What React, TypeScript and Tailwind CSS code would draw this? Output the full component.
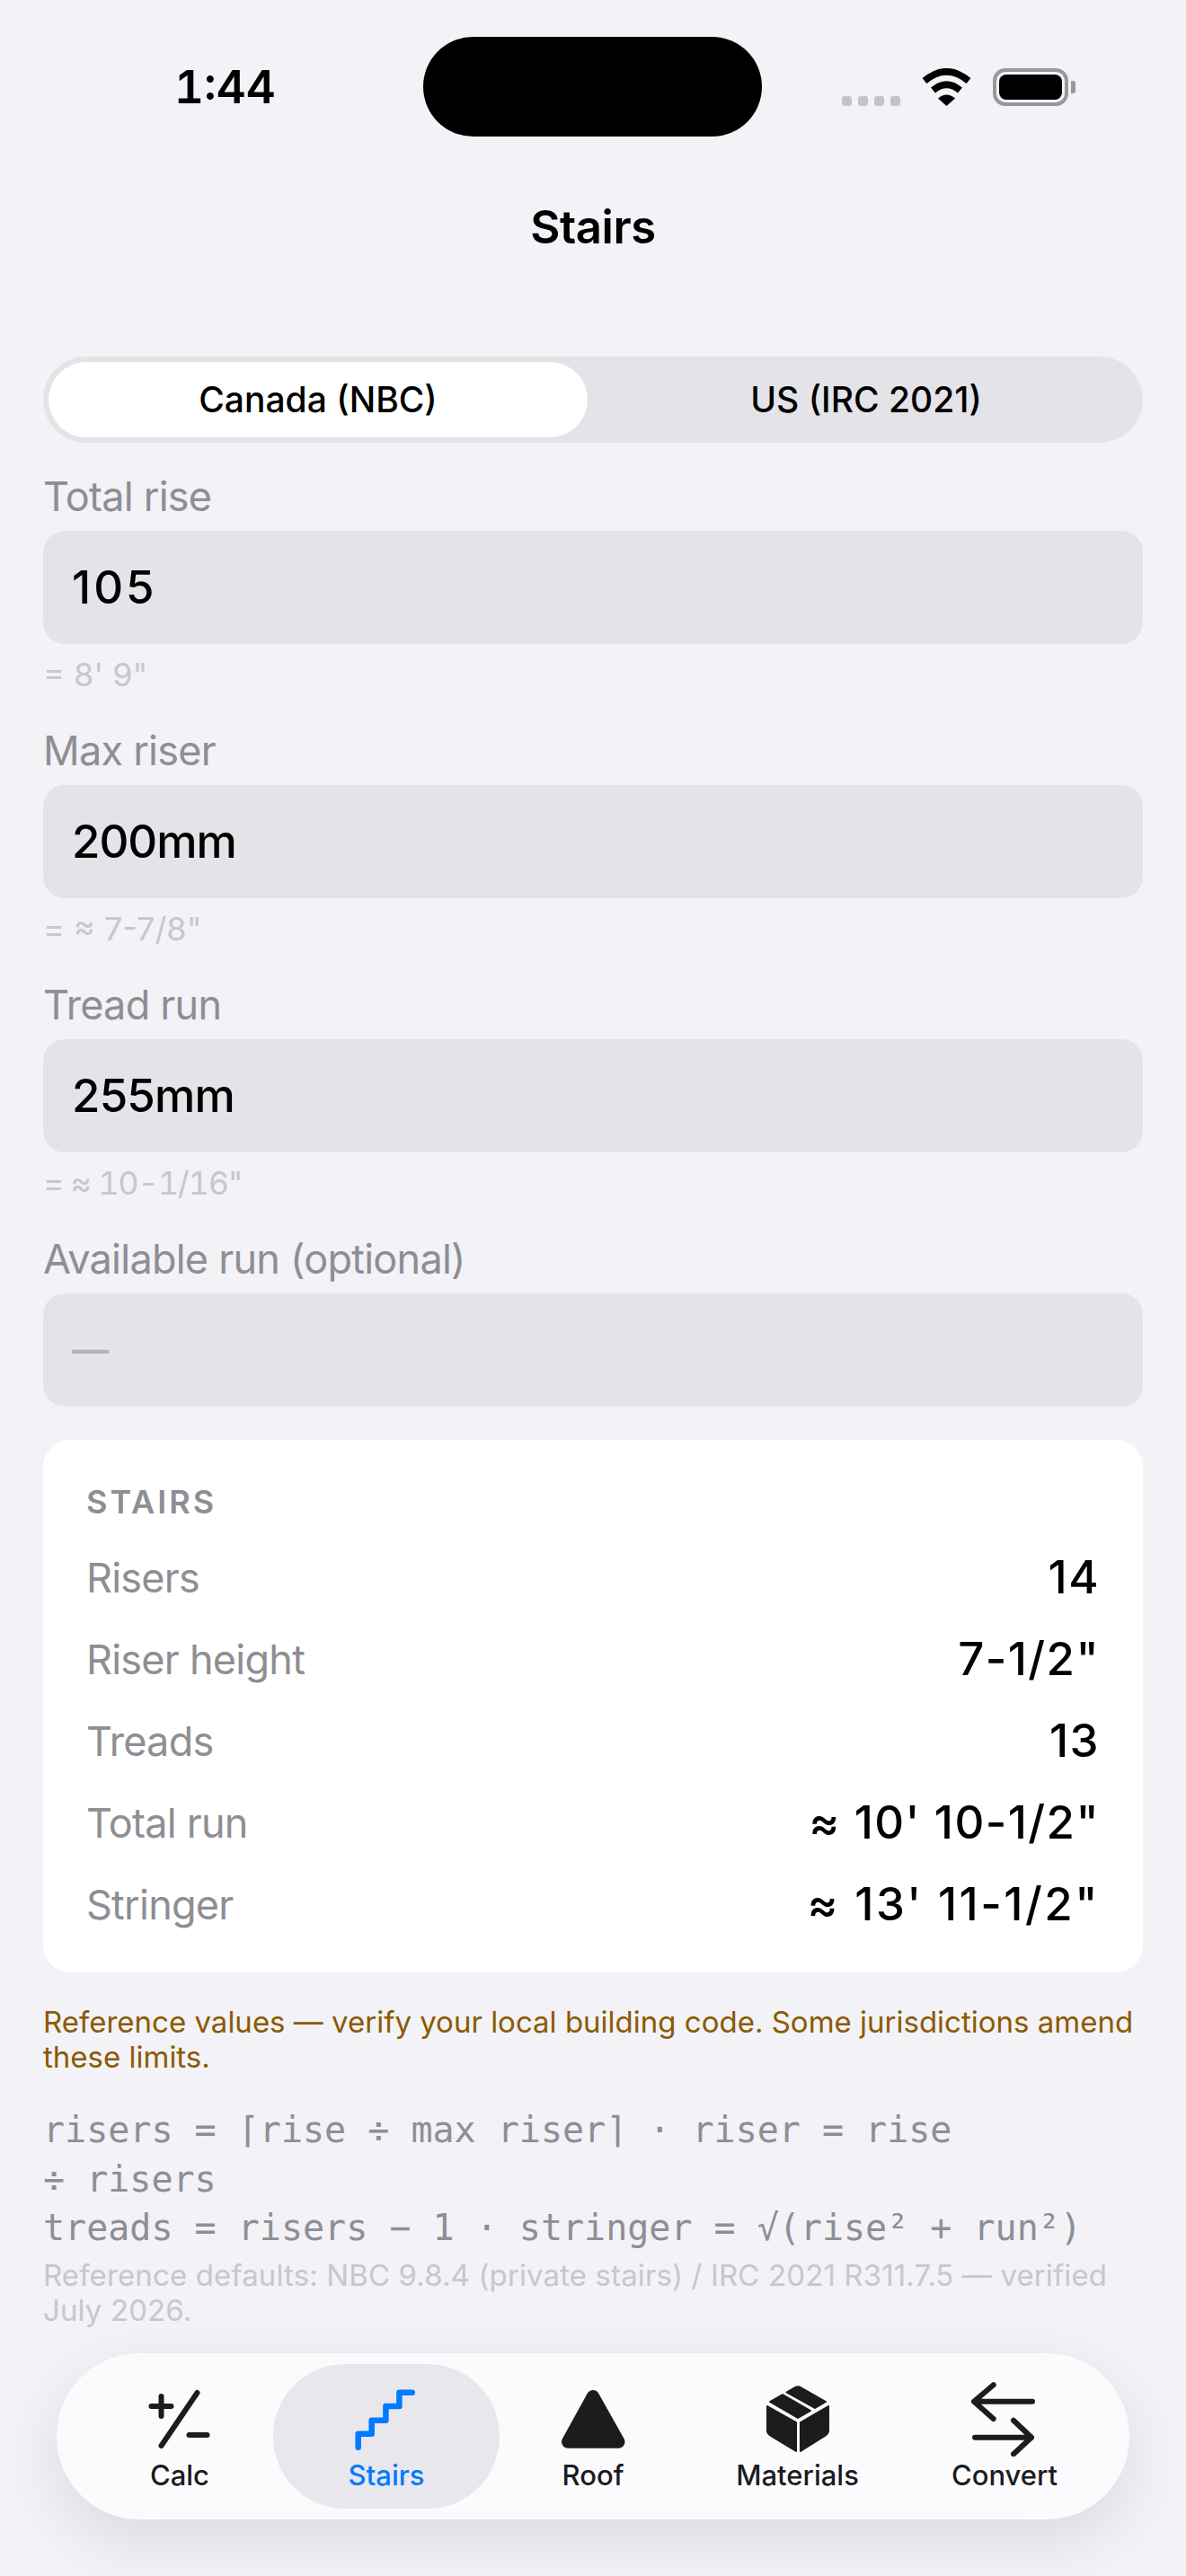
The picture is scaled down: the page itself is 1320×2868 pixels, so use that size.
import React from 'react';

const fields = [
  { label: 'Total rise', value: '105', valueCls: 'tracking-[3px]', hint: `= 8' 9"`, hintCls: '' },
  { label: 'Max riser', value: '200mm', valueCls: 'tracking-[-1px]', hint: '= ≈ 7-7/8"', hintCls: '' },
  { label: 'Tread run', value: '255mm', valueCls: 'tracking-[-0.800px]', hint: '= ≈ 10-1/16"', hintCls: 'tabular-nums tracking-[-1.200px]' },
];

const results = [
  { label: 'Risers', value: '14', valueCls: 'tracking-[1.400px]' },
  { label: 'Riser height', value: '7-1/2"', valueCls: 'tracking-[1.400px]' },
  { label: 'Treads', value: '13', valueCls: 'tracking-[1.400px]' },
  { label: 'Total run', value: `≈ 10' 10-1/2"`, valueCls: 'tracking-[1.400px]' },
  { label: 'Stringer', value: `≈ 13' 11-1/2"`, valueCls: 'tracking-[2.500px]' },
];

const CalcIcon = () => (
  <svg width="84" height="84" viewBox="0 0 84 84" fill="none" stroke="#1c1c1e" strokeWidth="6" strokeLinecap="round" strokeLinejoin="round">
    <path d="M10.500 28h22M21.500 17v22M61.500 13 21.500 72M52.500 60h20" />
  </svg>
);

const StairsIcon = () => (
  <svg width="84" height="84" viewBox="0 0 84 84" fill="none" stroke="#007aff" strokeWidth="6.500" strokeLinecap="round" strokeLinejoin="round">
    <path d="M10.700 73.700V58.700H25.700V43.700H41.400V28H56.400V12.700H70.700" />
  </svg>
);

const RoofIcon = () => (
  <svg width="84" height="84" viewBox="0 0 84 84" fill="#1c1c1e" stroke="#1c1c1e" strokeWidth="14" strokeLinejoin="round">
    <path d="M42 17 70.500 67.700H14Z" />
  </svg>
);

const BoxIcon = () => (
  <svg width="84" height="84" viewBox="0 0 84 84" fill="#1c1c1e" stroke="#1c1c1e" strokeWidth="2" strokeLinejoin="round">
    <path d="M8 28 40 46V78L12 61Q8 58.500 8 55Z" />
    <path d="M76 28 45 46V78L72 61Q76 58.500 76 55Z" />
    <path d="M11 23 25 15 56 33 42 41Z" />
    <path d="M29.500 12.500 39 7Q42.500 5.500 45 7L73 23 61 30Z" />
  </svg>
);

const ConvertIcon = () => (
  <svg width="84" height="84" viewBox="0 0 84 84" fill="none" stroke="#1c1c1e" strokeWidth="6" strokeLinecap="round" strokeLinejoin="round">
    <path d="M73 22.700H8M29.700 4.300 8 22.700 29.700 42M9 62.700H72M52 43.700 72 62.700 52 81.300" />
  </svg>
);

const tabs = [
  { label: 'Calc', icon: <CalcIcon />, cls: 'w-[238px] pl-[30px]' },
  { label: 'Stairs', icon: <StairsIcon />, cls: 'w-[252px] bg-[#e7e7ec]' },
  { label: 'Roof', icon: <RoofIcon />, cls: 'w-[208px]' },
  { label: 'Materials', icon: <BoxIcon />, cls: 'w-[247px]' },
  { label: 'Convert', icon: <ConvertIcon />, cls: 'w-[214px]' },
];

export default function App() {
  return (
    <div className="w-[1320px] h-[2868px] overflow-hidden bg-[#f2f2f7] font-['Inter',sans-serif] text-black">
      {/* status bar */}
      <div className="flex items-center h-[111px] mt-[41px] pl-[194px]">
        <span className="w-[277px] shrink-0 text-[51px] leading-none font-semibold tabular-nums">1:44</span>
        <div className="w-[377px] h-[111px] shrink-0 rounded-[56px] bg-black" />
        <div className="flex items-end shrink-0 ml-[89px] gap-[7px] h-[42px]">
          {[0, 1, 2, 3].map((i) => (
            <span key={i} className="w-[11px] h-[11px] rounded-[3px] bg-[#c4c4c8]" />
          ))}
          <svg className="ml-[16px]" width="57" height="42" viewBox="0 0 57 42">
            <path d="M4 14Q28.500-6.500 53 14M13.500 24.500Q28.500 12 43.500 24.500" fill="none" stroke="#000" strokeWidth="7.500" />
            <path d="M19 33.500Q28.500 25.500 38 33.500L28.500 42Z" fill="#000" />
          </svg>
          <div className="ml-[16px] flex items-center h-[42px]">
            <div className="w-[84px] h-[42px] rounded-[14px] border-[4px] border-[#98989c] p-[3px]">
              <div className="w-full h-full rounded-[8px] bg-black" />
            </div>
            <div className="ml-[3px] w-[5px] h-[14px] rounded-r-[3px] bg-[#98989c]" />
          </div>
        </div>
      </div>

      <div className="mt-[71px] text-center text-[51px] leading-[60px] font-semibold tracking-[-0.500px]">Stairs</div>

      <div className="mx-[48px] mt-[114px]">
        {/* segmented control */}
        <div className="flex h-[96px] rounded-[48px] bg-[#e3e3e8] p-[6px]">
          <div className="w-[600px] rounded-[42px] bg-white flex items-center justify-center text-[39px] font-medium">Canada (NBC)</div>
          <div className="flex-1 flex items-center justify-center pl-[8px] text-[39px] font-medium">US (IRC 2021)</div>
        </div>

        {fields.map((f, i) => (
          <div key={f.label} className={i === 0 ? 'mt-[33px]' : 'mt-[34px]'}>
            <div className="text-[45px] leading-[54px] tracking-[-0.750px] text-[#8e8e93]">{f.label}</div>
            <div className={`mt-[11px] h-[126px] rounded-[24px] bg-[#e3e3e8] flex items-center px-[32px] text-[51px] font-[450] ${f.valueCls}`}>{f.value}</div>
            <div className={`mt-[10px] text-[36px] leading-[48px] text-[#c7c7cc] ${f.hintCls}`}>{f.hint}</div>
          </div>
        ))}
        <div className="mt-[34px]">
          <div className="text-[45px] leading-[54px] tracking-[-0.750px] text-[#8e8e93]">Available run (optional)</div>
          <div className="mt-[11px] h-[126px] rounded-[24px] bg-[#e3e3e8] flex items-center px-[32px] text-[41px] font-semibold text-[#b3b3b8]">—</div>
        </div>

        {/* results card */}
        <div className="mt-[37px] bg-white rounded-[30px] px-[48px] pt-[47px] pb-[30px]">
          <div className="text-[36px] leading-[44px] font-semibold tracking-[3px] text-[#8e8e93]">STAIRS</div>
          <div className="mt-[17px]">
            {results.map((r) => (
              <div key={r.label} className="flex items-center justify-between h-[91px]">
                <span className="text-[45px] tracking-[-0.750px] text-[#8e8e93]">{r.label}</span>
                <span className={`text-[51px] font-[450] ${r.valueCls}`}>{r.value}</span>
              </div>
            ))}
          </div>
        </div>

        <p className="mt-[36px] text-[33px] leading-[39px] text-[#8a5a00]">
          Reference values — verify your local building code. Some jurisdictions amend these limits.
        </p>

        <div className="mt-[34px] font-['DejaVu_Sans_Mono',monospace] text-[40px] leading-[54.500px] text-[#8e8e93]">
          <div>risers = ⌈rise ÷ max riser⌉ · riser = rise</div>
          <div>÷ risers</div>
          <div>treads = risers − 1 · stringer = √(rise² + run²)</div>
        </div>

        <p className="mt-[6px] text-[33px] leading-[39px] tracking-[0.120px] text-[#c7c7cc]">
          Reference defaults: NBC 9.8.4 (private stairs) / IRC 2021 R311.7.5 — verified July 2026.
        </p>
      </div>

      {/* tab bar */}
      <div className="mx-[63px] mt-[28px] h-[185px] rounded-[92px] bg-[#fbfbfe] shadow-[0_24px_72px_rgba(0,0,0,0.1)] flex items-center pl-[3px]">
        {tabs.map((t, i) => (
          <div key={t.label} className={`flex flex-col items-center justify-center h-[161px] rounded-[80px] ${t.cls}`}>
            {t.icon}
            <span className={`text-[31px] leading-[36px] font-medium mt-[3px] ${i === 1 ? 'text-[#007aff]' : 'text-[#1c1c1e]'}`}>{t.label}</span>
          </div>
        ))}
      </div>
    </div>
  );
}
